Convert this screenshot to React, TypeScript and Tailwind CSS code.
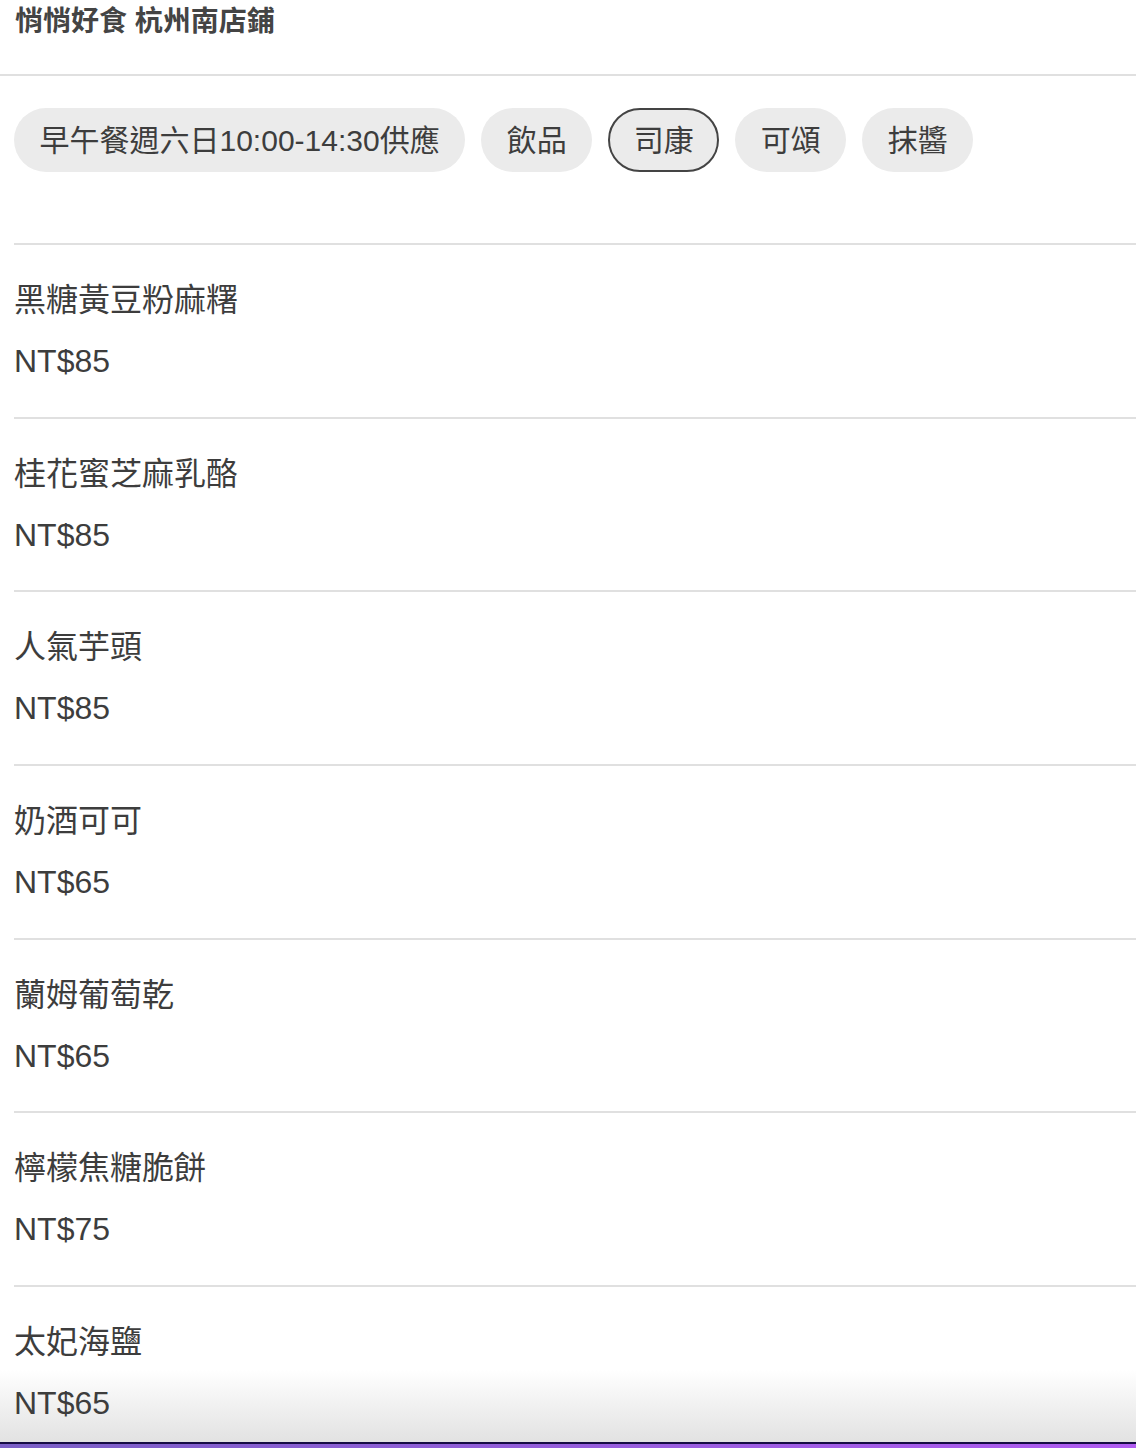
import React from "react";

const items = [
  { name: "黑糖黃豆粉麻糬", price: "NT$85" },
  { name: "桂花蜜芝麻乳酪", price: "NT$85" },
  { name: "人氣芋頭", price: "NT$85" },
  { name: "奶酒可可", price: "NT$65" },
  { name: "蘭姆葡萄乾", price: "NT$65" },
  { name: "檸檬焦糖脆餅", price: "NT$75" },
  { name: "太妃海鹽", price: "NT$65" },
];

const chips = [
  { label: "早午餐週六日10:00-14:30供應", active: false },
  { label: "飲品", active: false },
  { label: "司康", active: true },
  { label: "可頌", active: false },
  { label: "抹醬", active: false },
];

export default function App() {
  return (
    <div
      className="relative h-[1448px] w-full overflow-hidden bg-white text-[#3d3d3d]"
      style={{ fontFamily: '"Liberation Sans", "Noto Sans CJK TC", sans-serif' }}
    >
      <div className="pointer-events-none absolute bottom-[6px] left-0 h-[72px] w-full bg-gradient-to-b from-white to-[#e2e2e2]" />
      <div className="relative">
        <div className="pl-[15px] pt-[2px] pb-[32px] text-[28px] font-bold leading-[40px] text-[#444]">
          悄悄好食 杭州南店鋪
        </div>
        <div className="h-[2px] w-full bg-[#e0e0e0]" />
        <div className="flex gap-4 pl-[14px] pt-[32px] pb-[71px]">
          {chips.map((c) => (
            <div
              key={c.label}
              className={
                c.active
                  ? "flex h-16 items-center rounded-full border-2 border-[#444] bg-[#ebebeb] px-[23.5px] text-[30px] text-[#3d3d3d]"
                  : "flex h-16 items-center rounded-full bg-[#ebebeb] px-[25.5px] text-[30px] text-[#3d3d3d]"
              }
            >
              {c.label}
            </div>
          ))}
        </div>
        <div className="ml-[14px]">
          {items.map((it) => (
            <div key={it.name} className="border-t-2 border-[#e0e0e0] pt-[31px] pb-[31.7px]">
              <div className="text-[32px] leading-[48px]">{it.name}</div>
              <div className="mt-[13px] text-[32px] leading-[48px]">{it.price}</div>
            </div>
          ))}
        </div>
      </div>
      <div className="absolute bottom-[4px] left-0 h-[2px] w-full bg-[#160c45]" />
      <div className="absolute bottom-0 left-0 h-[4px] w-full bg-gradient-to-r from-[#7a5fc6] to-[#b05cf2]" />
    </div>
  );
}
